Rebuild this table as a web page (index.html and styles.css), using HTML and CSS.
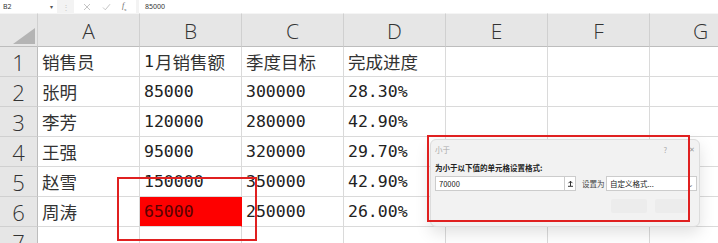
FILE: index.html
```html
<!DOCTYPE html>
<html>
<head>
<meta charset="utf-8">
<link rel="stylesheet" href="styles.css">
</head>
<body>
<div class="app">
  <div class="fbar">
    <div class="namebox"><span>B2</span><span class="caret">▾</span></div>
    <div class="sep">⋮</div>
    <div class="icons">
      <svg width="8" height="8" viewBox="0 0 8 8"><path d="M1 1L7 7M7 1L1 7" stroke="#bdbdbd" stroke-width="0.9"/></svg>
      <svg width="9" height="8" viewBox="0 0 9 8"><path d="M1 4.5L3.3 6.8L8 1.2" stroke="#bdbdbd" stroke-width="0.9" fill="none"/></svg>
      <span class="fx"><i>f</i><sub>x</sub></span>
    </div>
    <div class="formula">85000</div>
  </div>
  <div class="grid">
    <div class="corner"><div class="tri"></div></div>
    <div class="ch">A</div><div class="ch">B</div><div class="ch">C</div><div class="ch">D</div><div class="ch">E</div><div class="ch">F</div><div class="ch">G</div>

    <div class="rh">1</div><div class="c cn">销售员</div><div class="c cn"><span class="m">1</span>月销售额</div><div class="c cn">季度目标</div><div class="c cn">完成进度</div><div class="c"></div><div class="c"></div><div class="c"></div>
    <div class="rh">2</div><div class="c cn">张明</div><div class="c m">85000</div><div class="c m">300000</div><div class="c m">28.30%</div><div class="c"></div><div class="c"></div><div class="c"></div>
    <div class="rh">3</div><div class="c cn">李芳</div><div class="c m">120000</div><div class="c m">280000</div><div class="c m">42.90%</div><div class="c"></div><div class="c"></div><div class="c"></div>
    <div class="rh">4</div><div class="c cn">王强</div><div class="c m">95000</div><div class="c m">320000</div><div class="c m">29.70%</div><div class="c"></div><div class="c"></div><div class="c"></div>
    <div class="rh">5</div><div class="c cn">赵雪</div><div class="c m">150000</div><div class="c m">350000</div><div class="c m">42.90%</div><div class="c"></div><div class="c"></div><div class="c"></div>
    <div class="rh">6</div><div class="c cn">周涛</div><div class="c m red">65000</div><div class="c m">250000</div><div class="c m">26.00%</div><div class="c"></div><div class="c"></div><div class="c"></div>
    <div class="rh">7</div><div class="c"></div><div class="c"></div><div class="c"></div><div class="c"></div><div class="c"></div><div class="c"></div><div class="c"></div>
  </div>

  <div class="mark mark1"></div>

  <div class="dialog">
    <div class="dtitle"><span>小于</span><span class="dq">?</span><span class="dx">✕</span></div>
    <div class="dlabel">为小于以下值的单元格设置格式:</div>
    <div class="drow">
      <div class="dinput">70000</div>
      <div class="dbtn"><svg width="7" height="7" viewBox="0 0 7 7"><path d="M3.5 1.2V6M1.5 3.2L3.5 1.2L5.5 3.2M1 6.3H6" stroke="#333" stroke-width="1" fill="none"/></svg></div>
      <div class="dset">设置为</div>
      <div class="dselect"><span>自定义格式...</span><span class="chev">⌄</span></div>
    </div>
    <div class="dfoot"><div class="fb"></div><div class="fb"></div></div>
  </div>
  <div class="mark mark2"></div>
</div>
</body>
</html>
```
FILE: styles.css
```css
html, body { margin: 0; padding: 0; background: #fff; }
body { width: 718px; height: 243px; overflow: hidden; font-family: "Noto Sans CJK SC", "Noto Sans", sans-serif; }
.app { position: relative; width: 718px; height: 243px; overflow: hidden; }

.fbar { height: 13px; display: flex; align-items: stretch; background: #f3f3f3; font-family: "Noto Sans", "Noto Sans CJK SC", sans-serif; font-size: 7px; color: #333; }
.namebox { width: 57px; background: #fff; display: flex; align-items: center; justify-content: space-between; padding: 0 4px 0 3px; box-sizing: border-box; }
.caret { font-size: 6px; color: #555; }
.sep { width: 17px; color: #c8c8c8; display: flex; align-items: center; justify-content: center; font-size: 8px; }
.icons { width: 62px; background: #fff; display: flex; align-items: center; justify-content: space-around; margin-right: 3px; padding: 0 4px; box-sizing: border-box; }
.fx { font-family: "Liberation Serif", serif; color: #666; font-size: 8px; }
.fx sub { font-size: 5px; }
.formula { flex: 1; background: #fff; display: flex; align-items: center; padding-left: 6px; }

.grid { display: grid; grid-template-columns: 38px repeat(7, 102px); grid-template-rows: 34px repeat(7, 30px); margin-top: 0; }
.corner { background: #e6e6e6; border-right: 1px solid #d0d0d0; border-bottom: 1px solid #bdbdbd; position: relative; border-top: 1px solid #f5f5f5; }
.tri { position: absolute; right: 2px; bottom: 2px; width: 0; height: 0; border-left: 22px solid transparent; border-bottom: 16px solid #b4b4b4; }
.ch { background: #e6e6e6; border-right: 1px solid #d0d0d0; border-bottom: 1px solid #bdbdbd; border-top: 1px solid #f5f5f5; display: flex; align-items: center; justify-content: center; padding-top: 2px; font-family: "Open Sans", "Liberation Sans", sans-serif; font-size: 21px; font-weight: 300; color: #333; }
.rh { background: #e6e6e6; border-right: 1px solid #bdbdbd; border-bottom: 1px solid #d0d0d0; display: flex; align-items: center; justify-content: center; font-family: "Open Sans", "Liberation Sans", sans-serif; font-size: 22px; font-weight: 300; color: #333; }
.c { border-right: 1px solid #dadada; border-bottom: 1px solid #dadada; display: flex; align-items: center; padding-left: 4px; font-size: 17.5px; color: #222; white-space: nowrap; overflow: visible; }
.cn { font-family: "Noto Sans CJK SC", sans-serif; font-weight: 400; color: #333; }
.m { font-family: "DejaVu Sans Mono", "Liberation Mono", monospace; font-size: 16.5px; color: #222; }
.cn .m { padding-right: 1px; }
.red { background: #fe0000; border-right-color: #fe0000; color: #5a0000; }

.mark { position: absolute; border: 2px solid #e02020; box-sizing: border-box; pointer-events: none; }
.mark1 { left: 117px; top: 177px; width: 140px; height: 64px; }
.mark2 { left: 427px; top: 135px; width: 263px; height: 87px; }

.dialog { position: absolute; left: 430px; top: 139px; width: 270px; height: 88px; background: #f2f2f2; border: 1px solid #dcdcdc; border-radius: 6px; box-shadow: 0 6px 16px rgba(0,0,0,0.12); box-sizing: border-box; padding: 3px 4px 0 4px; font-size: 7.5px; color: #222; }
.dtitle { display: flex; align-items: center; height: 12px; color: #aaa; font-size: 7.5px; }
.dtitle span:first-child { flex: 1; }
.dq { margin-right: 22px; }
.dx { color: #999; font-size: 7px; margin-right: 0; }
.dlabel { margin-top: 8px; font-weight: 700; font-size: 7.5px; color: #222; height: 10px; line-height: 10px; }
.drow { display: flex; align-items: center; margin-top: 3px; height: 15px; }
.dinput { width: 129px; height: 15px; background: #fff; border: 1px solid #ccc; border-right: none; box-sizing: border-box; display: flex; align-items: center; padding-left: 3px; font-size: 7.5px; }
.dbtn { width: 12px; height: 15px; background: #fff; border: 1px solid #ccc; box-sizing: border-box; display: flex; align-items: center; justify-content: center; }
.dset { margin-left: 6px; width: 24px; color: #444; font-size: 7.5px; }
.dselect { flex: 1; height: 15px; background: #fff; border: 1px solid #ccc; box-sizing: border-box; display: flex; align-items: center; justify-content: space-between; padding: 0 2px 0 3px; font-size: 7.5px; margin-right: -2px; }
.chev { color: #888; font-size: 8px; line-height: 6px; }
.dfoot { display: flex; justify-content: flex-end; gap: 8px; margin-top: 8px; padding-right: 8px; }
.fb { width: 36px; height: 14px; background: #ececec; border-radius: 2px; }
.fb:last-child { width: 32px; }
```
